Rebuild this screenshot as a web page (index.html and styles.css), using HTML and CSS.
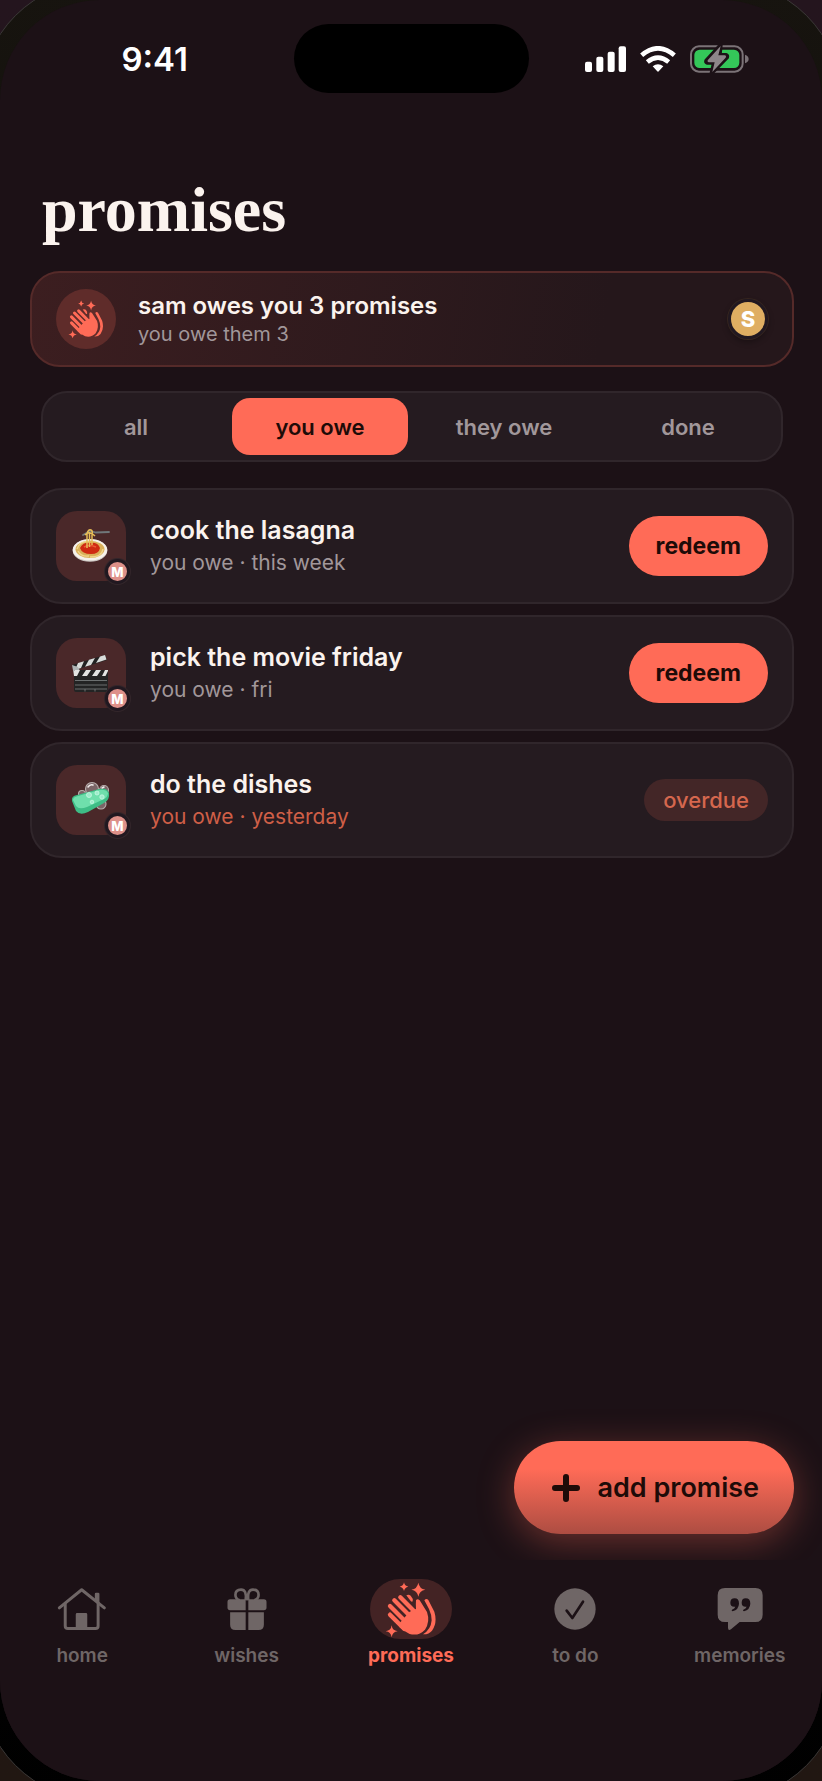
FILE: index.html
```html
<!DOCTYPE html>
<html lang="en">
<head>
    <meta charset="UTF-8">
    <meta name="viewport" content="width=device-width, initial-scale=1.0">
    <title>promises</title>
    <link rel="stylesheet" href="styles.css">
</head>
<body>

    <!-- Shared icons -->
    <svg class="sprite" aria-hidden="true">
        <symbol id="clap" viewBox="110 58 156 164">
            <g fill="none" stroke="currentColor" stroke-width="13" stroke-linecap="round">
                <path d="M125 157L168 200M125 131L175 181M138 114L190 166M156 105L205 154"/>
            </g>
            <g fill="currentColor">
                <path d="M152 184L184 148L203 140Q202 124 203 114Q207 107 214 114L236 149Q246 178 230 202Q211 222 184 215Q168 207 152 193Z"/>
                <path d="M228 114Q234 106 240 113L258 148Q268 181 251 205Q241 217 224 216Q248 201 250 174Q250 157 242 140Z"/>
                <path d="M174 99Q181 95 187 100Q195 108 193 117Q191 120 187 116Z"/>
                <path d="M167 60Q169 71 180 73Q169 75 167 86Q165 75 154 73Q165 71 167 60Z"/>
                <path d="M210 61Q213 79 231 82Q213 85 210 103Q207 85 189 82Q207 79 210 61Z"/>
                <path d="M130 189Q132 205 148 207Q132 209 130 225Q128 209 112 207Q128 205 130 189Z"/>
            </g>
        </symbol>
    </svg>

    <div class="device">
        <div class="screen">

            <header class="status-bar">
                <span class="time">9:41</span>
                <span class="island"></span>
                <div class="status-icons">
                    <svg width="41" height="26" viewBox="522 136 123 78" fill="#fff">
                        <rect x="522" y="183" width="21" height="31" rx="6"/>
                        <rect x="556" y="168" width="21" height="46" rx="6"/>
                        <rect x="590" y="153" width="21" height="61" rx="6"/>
                        <rect x="623" y="137" width="22" height="77" rx="6"/>
                    </svg>
                    <svg width="36" height="26" viewBox="687 135 108 78">
                        <g fill="none" stroke="#fff" stroke-width="14">
                            <path d="M692 163Q741 121 790 163"/>
                            <path d="M709 183Q741 157 773 183"/>
                        </g>
                        <path fill="#fff" d="M725 196Q741 183 757 196L744 210Q741 214 738 210Z"/>
                    </svg>
                    <svg width="59" height="28" viewBox="837 133 177 84">
                        <rect x="840" y="137" width="155" height="76" rx="24" fill="none" stroke="#7b7377" stroke-width="6"/>
                        <path d="M1002 162Q1013 166 1013 175Q1013 184 1002 188Z" fill="#7b7377"/>
                        <rect x="850" y="147" width="135" height="55" rx="16" fill="#34c759"/>
                        <path d="M929 133L886 180Q884 185 889 186H909L902 217L948 170Q950 164 945 163H926Z" fill="#8d8589" stroke="#1c1116" stroke-width="12" stroke-linejoin="round"/>
                        <path d="M929 136L890 179Q888 184 893 185H911L904 214L944 171Q947 165 941 164H922Z" fill="#8d8589"/>
                    </svg>
                </div>
            </header>

            <main class="content">
                <h1 class="page-title">promises</h1>

                <section class="summary">
                    <span class="summary-icon"><svg width="36" height="38"><use href="#clap"/></svg></span>
                    <div class="card-text">
                        <h2 class="summary-title">sam owes you 3 promises</h2>
                        <p class="summary-sub">you owe them 3</p>
                    </div>
                    <span class="avatar">S</span>
                </section>

                <div class="filters" role="group" aria-label="filter promises">
                    <button type="button" class="filter">all</button>
                    <button type="button" class="filter active" aria-pressed="true">you owe</button>
                    <button type="button" class="filter">they owe</button>
                    <button type="button" class="filter">done</button>
                </div>

                <ul class="promise-list">
                    <li class="promise">
                        <div class="tile">
                            <svg width="40" height="40" viewBox="0 0 40 40">
                                <ellipse cx="19" cy="24.5" rx="17.3" ry="11.3" fill="#c9c4c0"/>
                                <ellipse cx="19" cy="23.8" rx="17.3" ry="10.8" fill="#f6f1ea"/>
                                <ellipse cx="19" cy="23.3" rx="14.5" ry="8.6" fill="#d9b05a"/>
                                <path d="M6 23Q9 14 19 16M32 23Q31 31 19 31M7 25Q10 31 18 30" fill="none" stroke="#f1d68b" stroke-width="1.4"/>
                                <path d="M9 22Q12 16 19 17Q27 16 29 22Q28 28 20 28Q11 28 9 22Z" fill="#cf2a12"/>
                                <path d="M13 21Q18 18 25 21" fill="none" stroke="#ef5a35" stroke-width="1.6"/>
                                <path d="M12 9L19 5L25 6.5L38 6" fill="none" stroke="#70777a" stroke-width="1.8" stroke-linecap="round"/>
                                <path d="M16 22V8Q17 3 20 4Q22 5 21 9V19M18.500 21V6M14 9Q18 4 24 10" fill="none" stroke="#e6bd58" stroke-width="1.5"/>
                            </svg>
                            <span class="badge">M</span>
                        </div>
                        <div class="card-text">
                            <h2 class="card-title">cook the lasagna</h2>
                            <p class="card-sub">you owe · this week</p>
                        </div>
                        <button type="button" class="redeem">redeem</button>
                    </li>

                    <li class="promise">
                        <div class="tile">
                            <svg width="40" height="40" viewBox="0 0 40 40">
                                <path d="M1 12L34 2L36 7L4 17Z" fill="#222"/>
                                <path d="M7 10L13 8.300L10 15L4 17ZM18 6.700L24 5L20 12L14 13.700ZM29 3.500L34 2L35.500 6.500L25 10Z" fill="#d9dcda"/>
                                <path d="M1 12L7 14L10 20L3 23Z" fill="#aeb4b5"/>
                                <rect x="3" y="17" width="34" height="22" rx="2" fill="#232424"/>
                                <path d="M4 17H9L6 23H3V18ZM15 17H20L16 23H11ZM25 17H30L26 23H21ZM34 17H37V18L34.500 23H31Z" fill="#e3e5e3"/>
                                <path d="M4 27.500H36M4 32H36M4 36H36M14 36V38.500M24 36V38.500" fill="none" stroke="#757979" stroke-width=".9"/>
                            </svg>
                            <span class="badge">M</span>
                        </div>
                        <div class="card-text">
                            <h2 class="card-title">pick the movie friday</h2>
                            <p class="card-sub">you owe · fri</p>
                        </div>
                        <button type="button" class="redeem">redeem</button>
                    </li>

                    <li class="promise">
                        <div class="tile">
                            <svg width="40" height="40" viewBox="0 0 40 40">
                                <g fill="#7b6567" stroke="#b8aead" stroke-width="1.100">
                                    <circle cx="21" cy="9" r="6.500"/>
                                    <circle cx="33" cy="10" r="4.500"/>
                                    <circle cx="11" cy="14" r="3.500"/>
                                    <circle cx="30" cy="24" r="5"/>
                                </g>
                                <path d="M1 21Q0 16 6 15L28 9Q36 7 38 13Q39 20 33 23L17 32Q9 36 5 31Z" fill="#3ebd86"/>
                                <path d="M2 20Q2 17 7 16L28 10Q35 9 37 13Q37 18 31 20L16 27Q8 30 5 26Z" fill="#6fdfac"/>
                                <g fill="#9eeccb" stroke="#c8f7e2" stroke-width=".8">
                                    <circle cx="18" cy="15" r="2.500"/>
                                    <circle cx="26" cy="13" r="2"/>
                                    <circle cx="21" cy="22" r="1.800"/>
                                    <circle cx="31" cy="17" r="2.200"/>
                                </g>
                                <path d="M17 7Q19 4 22 5M31 8L33 7" fill="none" stroke="#f3eeee" stroke-width="1.500" stroke-linecap="round"/>
                            </svg>
                            <span class="badge">M</span>
                        </div>
                        <div class="card-text">
                            <h2 class="card-title">do the dishes</h2>
                            <p class="card-sub late">you owe · yesterday</p>
                        </div>
                        <span class="overdue">overdue</span>
                    </li>
                </ul>

                <button type="button" class="add-button">
                    <svg width="30" height="30" viewBox="0 0 30 30" fill="none" stroke="currentColor" stroke-width="6" stroke-linecap="round">
                        <path d="M15 4V26M4 15H26"/>
                    </svg>
                    add promise
                </button>
            </main>

            <nav class="tab-bar">
                <a class="tab" href="#home">
                    <span class="tab-icon">
                        <svg width="50" height="44" viewBox="172 110 152 133">
                            <g fill="none" stroke="currentColor" stroke-width="9" stroke-linecap="round" stroke-linejoin="round">
                                <path d="M179 173L247 118L316 173"/>
                                <path d="M197 160V228Q197 236 205 236H289Q297 236 297 228V160"/>
                            </g>
                            <path d="M229 236V193Q229 189 233 189H260Q264 189 264 193V236ZM287 150V131Q287 127 291 127H297Q301 127 301 131V162Z" fill="currentColor"/>
                        </svg>
                    </span>
                    home
                </a>
                <a class="tab" href="#wishes">
                    <span class="tab-icon">
                        <svg width="40" height="44" viewBox="681 110 120 133">
                            <g fill="none" stroke="currentColor" stroke-width="8">
                                <path d="M737 150Q741 118 723 118Q706 118 706 134Q706 146 719 150"/>
                                <path d="M745 150Q741 118 759 118Q776 118 776 134Q776 146 763 150"/>
                            </g>
                            <path d="M737 147V180H690Q682 180 682 172V155Q682 147 690 147ZM745 147V180H792Q800 180 800 172V155Q800 147 792 147ZM737 186V240H706Q690 240 690 224V186ZM745 186V240H776Q792 240 792 224V186Z" fill="currentColor"/>
                        </svg>
                    </span>
                    wishes
                </a>
                <a class="tab current" href="#promises" aria-current="page">
                    <span class="tab-icon"><svg width="52" height="56"><use href="#clap"/></svg></span>
                    promises
                </a>
                <a class="tab" href="#todo">
                    <span class="tab-icon">
                        <svg width="42" height="42" viewBox="435 113 126 126">
                            <circle cx="498" cy="176" r="62" fill="currentColor"/>
                            <path class="cutout-line" d="M473 181L490 203L522 154"/>
                        </svg>
                    </span>
                    to do
                </a>
                <a class="tab" href="#memories">
                    <span class="tab-icon">
                        <svg width="46" height="44" viewBox="922 110 138 132">
                            <path d="M946 113H1037Q1059 113 1059 135V193Q1059 215 1037 215H990L964 237Q955 242 955 232V215H946Q924 215 924 193V135Q924 113 946 113Z" fill="currentColor"/>
                            <path class="cutout" d="M975 144Q988 144 988 160Q987 178 969 183Q964 181 967 178Q975 175 977 169Q962 171 962 157Q962 144 975 144ZM1008 144Q1022 144 1022 160Q1021 178 1003 183Q998 181 1001 178Q1009 175 1011 169Q996 171 996 157Q996 144 1008 144Z"/>
                        </svg>
                    </span>
                    memories
                </a>
            </nav>

        </div>
    </div>

</body>
</html>
```
FILE: styles.css
```css
* {
    box-sizing: border-box;
}

body {
    margin: 0;
    overflow: hidden;
    background: linear-gradient(#24151e, #211712);
    font-family: Inter, "Liberation Sans", sans-serif;
    color: #fbf3ee;
}

h1, h2, p, ul {
    margin: 0;
    padding: 0;
}

button {
    border: none;
    font-family: inherit;
    cursor: pointer;
}

svg {
    display: block;
}

.sprite {
    position: absolute;
    width: 0;
    height: 0;
}

/* The frame runs past the window on every side, only its corners show */
.device {
    margin: -20px;
    padding: 19px;
    border: 1px solid #3b3837;
    border-radius: 120px;
    background: linear-gradient(#17140f, #000000);
}

.screen {
    display: flex;
    flex-direction: column;
    min-height: 100vh;
    border-radius: 100px;
    background-color: #1c1116;
    overflow: hidden;
}

/* Status Bar */
.status-bar {
    display: grid;
    grid-template-columns: 1fr 235px 1fr;
    align-items: center;
    padding-top: 24px;
}

.time {
    padding-left: 16px;
    text-align: center;
    font-size: 33px;
    font-weight: 600;
    color: #ffffff;
}

.island {
    height: 69px;
    border-radius: 35px;
    background-color: #000000;
}

.status-icons {
    display: flex;
    justify-content: center;
    align-items: center;
    gap: 14px;
    padding-right: 16px;
}

/* Content */
.content {
    flex: 1;
    display: flex;
    flex-direction: column;
    padding: 81px 28px 26px 30px;
}

.page-title {
    margin: 0 12px 25px;
    font-family: "Liberation Serif", serif;
    font-size: 64px;
    line-height: 72px;
    font-weight: bold;
}

.summary {
    display: flex;
    align-items: center;
    gap: 22px;
    padding: 16px 24px;
    border: 2px solid #552a29;
    border-radius: 30px;
    background: linear-gradient(100deg, #3c1e20, #25171b 75%);
}

.summary-icon {
    display: flex;
    align-items: center;
    justify-content: center;
    width: 60px;
    height: 60px;
    border-radius: 50%;
    background-color: #5f2c2a;
    color: #ff6b57;
}

.card-text {
    flex: 1;
}

.summary-title {
    font-size: 24px;
    line-height: 30px;
    font-weight: 600;
}

.summary-sub {
    font-size: 20px;
    line-height: 26px;
    color: #a1979a;
}

.avatar {
    display: flex;
    align-items: center;
    justify-content: center;
    width: 40px;
    height: 40px;
    border: 3px solid #211820;
    border-radius: 50%;
    background-color: #dfae62;
    box-shadow: 0 0 0 1px #35251f, 0 3px 6px rgba(0, 0, 0, 0.3);
    font-size: 22px;
    font-weight: 800;
    color: #ffffff;
}

/* Filters */
.filters {
    display: grid;
    grid-template-columns: repeat(4, 1fr);
    gap: 8px;
    margin: 24px 11px 26px;
    padding: 5px;
    border: 2px solid #30262b;
    border-radius: 26px;
    background-color: #251b20;
}

.filter {
    height: 57px;
    padding: 0;
    border-radius: 18px;
    background: none;
    font-size: 22px;
    font-weight: 600;
    color: #a1979a;
}

.filter.active {
    background-color: #ff6b57;
    color: #1e0b08;
}

/* Promise List */
.promise-list {
    display: grid;
    gap: 11px;
    list-style: none;
}

.promise {
    display: flex;
    align-items: center;
    gap: 24px;
    padding: 21px 24px;
    border: 2px solid #30262b;
    border-radius: 32px;
    background-color: #251b20;
}

.tile {
    position: relative;
    display: flex;
    align-items: center;
    justify-content: center;
    width: 70px;
    height: 70px;
    border-radius: 21px;
    background-color: #4a2829;
}

.badge {
    position: absolute;
    right: -4px;
    bottom: -3px;
    display: flex;
    align-items: center;
    justify-content: center;
    width: 25px;
    height: 25px;
    border: 3px solid #211820;
    border-radius: 50%;
    background-color: #dd9089;
    box-shadow: 0 0 0 1px #33262a;
    font-size: 13px;
    font-weight: 800;
    color: #ffffff;
}

.card-title {
    font-size: 25px;
    line-height: 30px;
    font-weight: 600;
}

.card-sub {
    margin-top: 4px;
    font-size: 21px;
    line-height: 28px;
    color: #a1979a;
}

.card-sub.late {
    color: #cf5f47;
}

.redeem {
    height: 60px;
    padding: 0 27px;
    border-radius: 30px;
    background-color: #ff6b57;
    font-size: 23px;
    font-weight: 700;
    color: #1e0b08;
}

.overdue {
    padding: 0 19px;
    border-radius: 21px;
    background-color: #432627;
    font-size: 22px;
    line-height: 42px;
    font-weight: 500;
    color: #d5674e;
}

.add-button {
    display: flex;
    align-items: center;
    align-self: flex-end;
    gap: 16px;
    height: 93px;
    margin-top: auto;
    padding: 0 35px 0 37px;
    border-radius: 47px;
    background: linear-gradient(#ff6b57 30%, #ad4d42);
    box-shadow: 0 8px 36px rgba(255, 107, 87, 0.35);
    font-size: 27px;
    font-weight: 600;
    color: #1e0b08;
}

/* Tab Bar */
.tab-bar {
    position: relative;
    display: grid;
    grid-template-columns: repeat(5, 1fr);
    padding: 19px 0 113px;
    background-color: #1c1116;
}

.tab {
    display: flex;
    flex-direction: column;
    align-items: center;
    gap: 5px;
    font-size: 19px;
    line-height: 24px;
    font-weight: 600;
    color: #6f6666;
    text-decoration: none;
}

.tab-icon {
    display: flex;
    align-items: center;
    justify-content: center;
    width: 82px;
    height: 60px;
    border-radius: 30px;
}

.tab.current {
    font-weight: 700;
    color: #ff6b57;
}

.tab.current .tab-icon {
    background-color: #432324;
}

.cutout {
    fill: #1c1116;
}

.cutout-line {
    fill: none;
    stroke: #1c1116;
    stroke-width: 8;
    stroke-linecap: round;
    stroke-linejoin: round;
}
```
